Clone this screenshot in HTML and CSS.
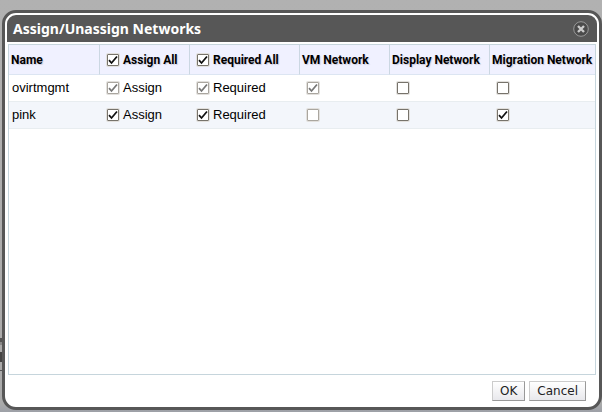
FILE: index.html
```html
<!DOCTYPE html>
<html lang="en">
<head>
<meta charset="utf-8">
<title>Assign/Unassign Networks</title>
<link rel="stylesheet" href="styles.css">
</head>
<body>
<div class="backdrop-edge"></div>
<main class="dialog" role="dialog" aria-labelledby="title">
  <header class="titlebar">
    <h1 id="title">Assign/Unassign Networks</h1>
    <button class="close" type="button" aria-label="Close">
      <svg viewBox="0 0 16 16" width="16" height="16"><circle cx="8" cy="8" r="7.3" fill="#4b4b4b" stroke="#999"/><path d="M5 5l6 6M11 5l-6 6" stroke="#ccc" stroke-width="2.4"/></svg>
    </button>
  </header>
  <section class="panel">
    <table>
      <colgroup><col class="w-name"><col class="w-assign"><col class="w-required"><col class="w-vm"><col class="w-display"><col></colgroup>
      <thead>
        <tr>
          <th>Name</th>
          <th class="pick"><label><input type="checkbox" checked>Assign All</label></th>
          <th class="pick"><label><input type="checkbox" checked>Required All</label></th>
          <th>VM Network</th>
          <th>Display Network</th>
          <th>Migration Network</th>
        </tr>
      </thead>
      <tbody>
        <tr>
          <td>ovirtmgmt</td>
          <td class="pick"><label><input type="checkbox" checked disabled>Assign</label></td>
          <td class="pick"><label><input type="checkbox" checked disabled>Required</label></td>
          <td class="pick"><input type="checkbox" aria-label="VM network" checked disabled></td>
          <td class="pick"><input type="checkbox" aria-label="Display network"></td>
          <td class="pick"><input type="checkbox" aria-label="Migration network"></td>
        </tr>
        <tr>
          <td>pink</td>
          <td class="pick"><label><input type="checkbox" checked>Assign</label></td>
          <td class="pick"><label><input type="checkbox" checked>Required</label></td>
          <td class="pick"><input type="checkbox" aria-label="VM network" disabled></td>
          <td class="pick"><input type="checkbox" aria-label="Display network"></td>
          <td class="pick"><input type="checkbox" aria-label="Migration network" checked></td>
        </tr>
      </tbody>
    </table>
  </section>
  <footer class="actions">
    <button type="button">OK</button>
    <button type="button">Cancel</button>
  </footer>
</main>
</body>
</html>
```

FILE: styles.css
```css
* { box-sizing: border-box; }

body {
  display: flex;
  min-height: 100vh;
  margin: 0;
  padding: 10px 0 2px;
  background: linear-gradient(#b1b1b1, #aaa 98%, #9da0a7);
  color: #000;
  font: 13px/16px "Liberation Sans", Arial, sans-serif;
}

.backdrop-edge {
  width: 2px;
  background: linear-gradient(transparent 328px, #555 328px 332px, #888 332px 335px, #aaa 335px 342px, #444 342px 352px, #aaa 352px 360px, #555 360px 361px, transparent 361px);
}

.dialog {
  flex: 1;
  display: flex;
  flex-direction: column;
  min-width: 0;
  padding: 2px;
  border: 3px solid #575757;
  border-radius: 14px;
  background: #fff;
}

.titlebar {
  display: flex;
  align-items: center;
  justify-content: space-between;
  height: 27px;
  padding: 0 8px 0 6px;
  border-radius: 9px 9px 0 0;
  background: #575757;
  color: #fff;
}

.titlebar h1 {
  margin: 0;
  font: bold 14px/20px "Noto Sans", "Open Sans", sans-serif;
}

.close {
  display: flex;
  padding: 0;
  border: 0;
  background: none;
}

.panel {
  flex: 1;
  margin: 2px 1px 0;
  border: 1px solid #c6d5dc;
}

table {
  width: 100%;
  border-collapse: separate;
  border-spacing: 0;
  table-layout: fixed;
}

.w-name { width: 91px; }
.w-assign, .w-vm { width: 90px; }
.w-required { width: 110px; }
.w-display { width: 100px; }

th {
  height: 30px;
  padding: 0 2px;
  border-right: 1px solid #cbd7e2;
  border-bottom: 1px solid #dce5f2;
  background: #f0f1ff;
  font: bold 12px/16px Roboto, "Liberation Sans", sans-serif;
  text-align: left;
  text-shadow: 1px 1px 1px #ccd;
  white-space: nowrap;
}

th:last-child { border-right: 0; }

td {
  height: 27px;
  padding: 0 3px;
  border-bottom: 1px solid #e8edf0;
}

tbody tr:nth-child(even) { background: #f3f6fb; }

th.pick, td.pick { padding: 0 0 0 7px; }

label {
  display: flex;
  align-items: center;
  gap: 4px;
}

input {
  appearance: none;
  display: block;
  flex: none;
  width: 12px;
  height: 12px;
  margin: 0;
  border: 1px solid #77736b;
  border-radius: 1px;
  background: #fff;
  box-shadow: 0 0 0 1px #e2e0dd;
}

input:checked {
  background-image: url("data:image/svg+xml,%3Csvg xmlns='http://www.w3.org/2000/svg' viewBox='0 0 10 10'%3E%3Cpath d='M1 5.2l2.5 2.8L9 1.5' fill='none' stroke='%23111' stroke-width='1.8'/%3E%3C/svg%3E");
}

input:disabled { border-color: #aaa69f; }

input:checked:disabled {
  background-image: url("data:image/svg+xml,%3Csvg xmlns='http://www.w3.org/2000/svg' viewBox='0 0 10 10'%3E%3Cpath d='M1 5.2l2.5 2.8L9 1.5' fill='none' stroke='%23777' stroke-width='1.8'/%3E%3C/svg%3E");
}

.actions {
  display: flex;
  justify-content: flex-end;
  gap: 4px;
  padding: 6px 11px 4px;
}

.actions button {
  height: 20px;
  padding: 0 7px;
  border: 1px solid #ccc;
  border-right-color: #999;
  border-bottom-color: #999;
  background: linear-gradient(#fff, #e8e8ec);
  color: #222;
  font: 12px/16px "DejaVu Sans", sans-serif;
}
```
